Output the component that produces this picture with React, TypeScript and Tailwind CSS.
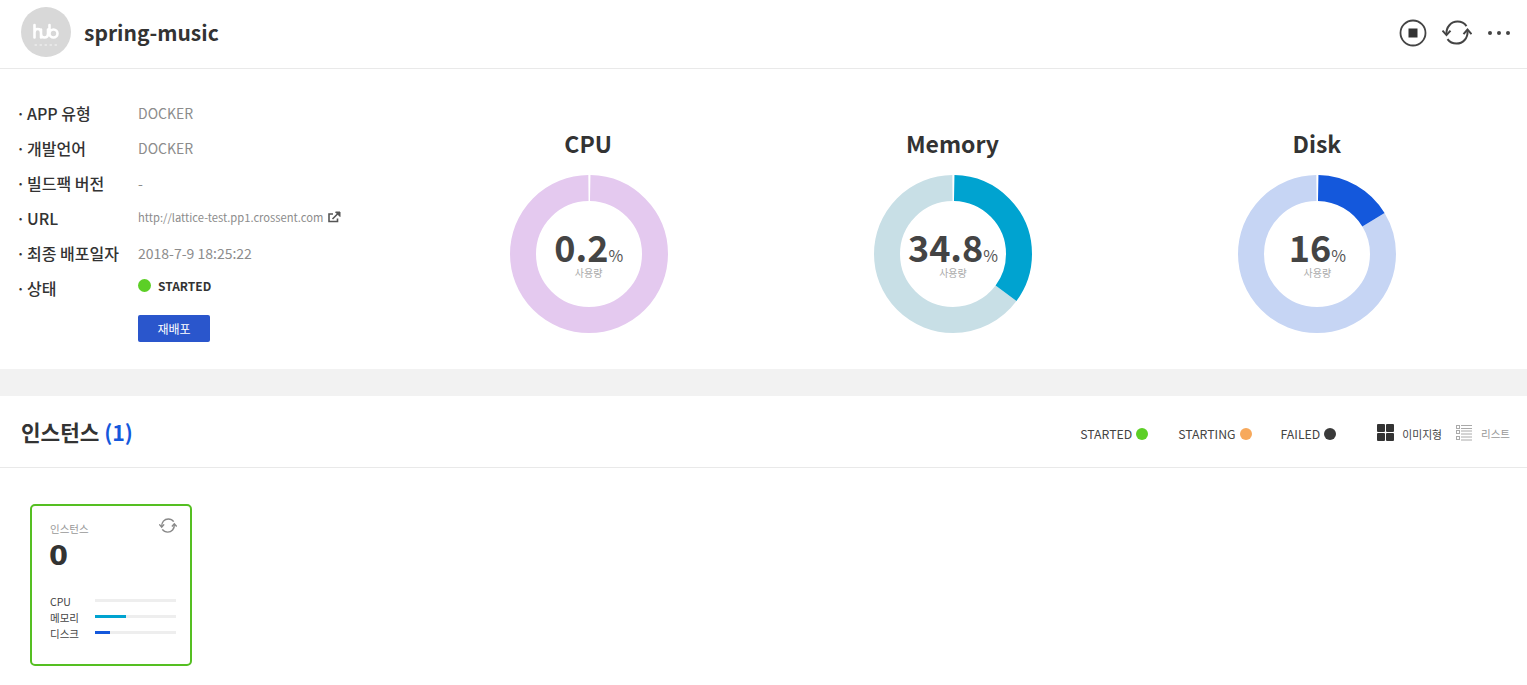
const FONT = "font-['Noto_Sans_CJK_KR','Noto_Sans',sans-serif]";

function HubLogo() {
  return (
    <div className="w-[50px] h-[50px] rounded-full bg-[#d8d8d8] flex items-center justify-center">
      <svg width="50" height="50" viewBox="0 0 50 50" fill="none" stroke="#fff" strokeLinecap="round">
        <path d="M13.500 18v12.500M13.500 25.500c0-2.500 1.500-3.500 3.200-3.500S20 23 20 25.500v5M20 22.500v4.500c0 2.500 1.800 3.500 3.500 3.500S27 29.500 27 27v-4.500M28.500 18v8.500M28.500 26.500a4 4 0 1 0 8 0a4 4 0 1 0-8 0" strokeWidth="2.600" />
        <path d="M14 38h1.500M19 38h1.500M24 38h1.500M29 38h1.500M34 38h1.500" strokeWidth="1" opacity="0.8" />
      </svg>
    </div>
  );
}

function SyncIcon({ size, color, strokeWidth }: { size: number; color: string; strokeWidth: number }) {
  return (
    <svg width={size} height={size * 0.84} viewBox="0 0 30 25" fill="none" stroke={color} strokeWidth={strokeWidth}>
      <path d="M4.500 14C4 7 9 1.500 15.500 1.500C19.500 1.500 22.500 3.200 24.500 6" />
      <path d="M25.500 11C26 18 21 23.500 14.500 23.500C10.500 23.500 7.500 21.800 5.500 19" />
      <path d="M0.500 10.500L4.500 15L8.500 10.500" />
      <path d="M21.500 14L25.500 9.500L29.500 14" />
    </svg>
  );
}

function Donut({ title, value, percent, track, fill }: { title: string; value: string; percent: number; track: string; fill: string }) {
  const r = 66;
  const c = 2 * Math.PI * r;
  const len = (percent / 100) * c;
  // tiny white seam between segments, as the chart draws them
  const gap = 2.5;
  return (
    <div className="flex flex-col items-center">
      <div className="text-[23px] leading-[36px] font-bold text-[#333] mt-[56px]">{title}</div>
      <div className="relative w-[160px] h-[160px] mt-[13px] ml-[1px]">
        <svg width="160" height="160" viewBox="0 0 160 160" className="-rotate-90">
          <circle cx="80" cy="80" r={r} fill="none" stroke={track} strokeWidth="26" strokeDasharray={`${c - len - gap} ${c}`} strokeDashoffset={-(len + gap / 2)} />
          <circle cx="80" cy="80" r={r} fill="none" stroke={fill} strokeWidth="26" strokeDasharray={`${len} ${c}`} strokeDashoffset={-gap / 2} />
        </svg>
        <div className="absolute inset-0 flex flex-col items-center justify-center">
          <div className="flex items-baseline h-[30px] mt-[2px]">
            <span className="text-[36px] leading-[30px] font-bold text-[#444]">{value}</span>
            <span className="text-[16px] leading-[16px] text-[#555]">%</span>
          </div>
          <div className="text-[10px] leading-[14px] text-[#aaa] mt-[5px]">사용량</div>
        </div>
      </div>
    </div>
  );
}

function InfoRow({ label, children }: { label: string; children: React.ReactNode }) {
  return (
    <div className="flex h-[35px] items-center">
      <div className="w-[122px] flex text-[16px] text-[#333] font-medium mb-[2px]">
        <span className="w-[11px]">·</span>
        <span>{label}</span>
      </div>
      <div className="text-[14px] text-[#8c8c8c] flex items-center">{children}</div>
    </div>
  );
}

function Legend({ label, color, className }: { label: string; color: string; className: string }) {
  return (
    <div className={`flex items-center gap-[4px] text-[12.300px] text-[#444] ${className}`}>
      <span>{label}</span>
      <span className={`w-[12px] h-[12px] rounded-full ${color}`} />
    </div>
  );
}

function UsageBar({ label, width, color }: { label: string; width: number; color: string }) {
  return (
    <div className="flex items-start h-[16px]">
      <div className="w-[45px] text-[10.500px] leading-[16px] text-[#444]">{label}</div>
      <div className="w-[81px] h-[3px] bg-[#eeeeee] mt-[5px]">
        <div className={`h-full ${color}`} style={{ width }} />
      </div>
    </div>
  );
}

export default function App() {
  return (
    <div className={`${FONT} w-[1527px] h-[685px] bg-white overflow-hidden`}>
      <header className="h-[69px] border-b border-[#e9e9e9] flex items-center pl-[21px] pr-[16px]">
        <div className="mb-[5px]">
          <HubLogo />
        </div>
        <h1 className="ml-[13px] text-[21px] font-bold text-[#333] mb-[2px]">spring-music</h1>
        <div className="ml-auto flex items-center mb-[3px]">
          <svg width="28" height="28" viewBox="0 0 28 28" fill="none">
            <circle cx="14" cy="14" r="12.500" stroke="#444" strokeWidth="1.800" />
            <rect x="9.500" y="9.500" width="9" height="9" fill="#333" />
          </svg>
          <div className="ml-[15px]">
            <SyncIcon size={30} color="#444" strokeWidth={2} />
          </div>
          <svg width="24" height="6" viewBox="0 0 24 6" className="ml-[15px]" fill="#444">
            <circle cx="3" cy="3" r="2" />
            <circle cx="12" cy="3" r="2" />
            <circle cx="21" cy="3" r="2" />
          </svg>
        </div>
      </header>

      <section className="h-[300px] flex">
        <div className="w-[406px] pl-[16px] pt-[27px]">
          <InfoRow label="APP 유형">DOCKER</InfoRow>
          <InfoRow label="개발언어">DOCKER</InfoRow>
          <InfoRow label="빌드팩 버전">-</InfoRow>
          <InfoRow label="URL">
            <span className="text-[11.200px] mb-[2px]">http://lattice-test.pp1.crossent.com</span>
            <svg width="13" height="12" viewBox="0 0 13 12" className="ml-[5px] mb-[2px]" fill="none" stroke="#555" strokeWidth="1.600">
              <path d="M9.500 7.500V10.500H1V3H5" />
              <path d="M4.500 8L10.500 2" />
              <path d="M7.500 1H12V5.500Z" fill="#555" strokeWidth="1" />
            </svg>
          </InfoRow>
          <InfoRow label="최종 배포일자">2018-7-9 18:25:22</InfoRow>
          <InfoRow label="상태">
            <div className="flex items-center mb-[6px]">
              <span className="w-[13px] h-[13px] rounded-full bg-[#5ccf26]" />
              <span className="ml-[7px] text-[12px] font-bold text-[#333]">STARTED</span>
            </div>
          </InfoRow>
          <button className="ml-[122px] mt-[9px] w-[72px] h-[27px] bg-[#2a56cc] rounded-[2px] text-white text-[12px]">재배포</button>
        </div>
        <div className="flex-1 pr-[28px] grid grid-cols-3">
          <Donut title="CPU" value="0.2" percent={0} track="#e4c9ef" fill="#e4c9ef" />
          <Donut title="Memory" value="34.8" percent={34.8} track="#c8dfe6" fill="#00a3d0" />
          <Donut title="Disk" value="16" percent={16} track="#c6d5f4" fill="#1458dc" />
        </div>
      </section>

      <div className="h-[27px] bg-[#f2f2f2]" />

      <div className="h-[72px] border-b border-[#e9e9e9] flex items-center pl-[21px] pr-[17px]">
        <h2 className="text-[21.300px] font-bold text-[#333]">
          인스턴스 <span className="text-[#1458dc]">(1)</span>
        </h2>
        <div className="ml-auto flex items-center pt-[5px]">
          <Legend label="STARTED" color="bg-[#5ccf26]" className="" />
          <Legend label="STARTING" color="bg-[#f7a95c]" className="ml-[30px]" />
          <Legend label="FAILED" color="bg-[#3a3a3a]" className="ml-[29px]" />
          <div className="ml-[41px] grid grid-cols-2 gap-[1px] w-[17px] h-[17px] mb-[3px]">
            <span className="bg-[#333] rounded-[1px]" />
            <span className="bg-[#333] rounded-[1px]" />
            <span className="bg-[#333] rounded-[1px]" />
            <span className="bg-[#333] rounded-[1px]" />
          </div>
          <span className="ml-[8px] text-[10.800px] text-[#444]">이미지형</span>
          <svg width="16" height="17" viewBox="0 0 16 17" className="ml-[14px] mb-[3px]" fill="none" stroke="#aaa">
            <rect x="0.500" y="1.500" width="3" height="3" />
            <rect x="0.500" y="6.500" width="3" height="3" />
            <rect x="0.500" y="12.500" width="3" height="3" />
            <path d="M5 1.500H16M5 4.500H16M5 7H16M5 10H16M5 13H16M5 16H16" />
          </svg>
          <span className="ml-[9px] text-[10.500px] text-[#999]">리스트</span>
        </div>
      </div>

      <div className="pt-[36px] pl-[30px]">
        <div className="relative w-[162px] h-[162px] border-2 border-[#55bf22] rounded-[5px] pl-[18px] pt-[15px]">
          <div className="absolute top-[12px] right-[13px]">
            <SyncIcon size={18} color="#888" strokeWidth={2.4} />
          </div>
          <div className="text-[10.500px] leading-[16px] text-[#999]">인스턴스</div>
          <div className="font-['DejaVu_Sans',sans-serif] text-[26px] leading-[34px] font-bold text-[#333] mt-[2px] -ml-[1px] origin-left scale-x-[1.05]">0</div>
          <div className="mt-[21px]">
            <UsageBar label="CPU" width={0} color="bg-[#00a3d0]" />
            <UsageBar label="메모리" width={31} color="bg-[#00a3d0]" />
            <UsageBar label="디스크" width={15} color="bg-[#1458dc]" />
          </div>
        </div>
      </div>
    </div>
  );
}
